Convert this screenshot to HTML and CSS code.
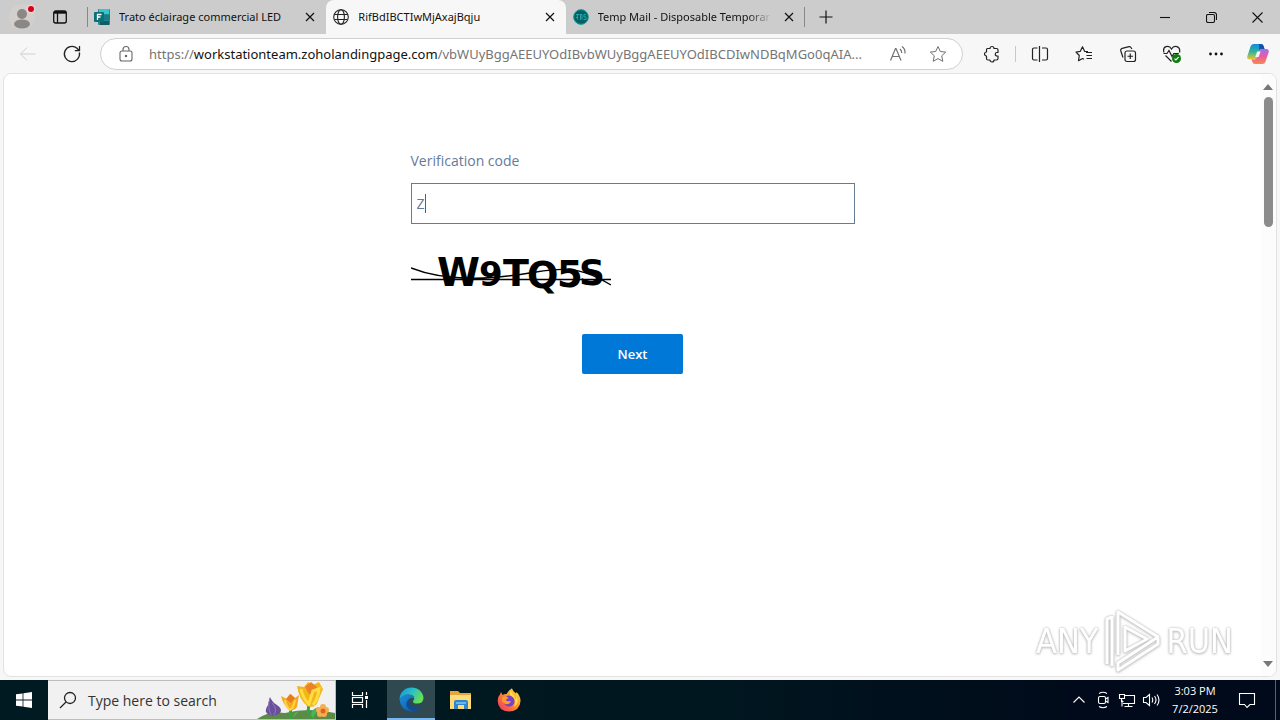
FILE: index.html
```html
<!DOCTYPE html>
<html lang="en">
<head>
<meta charset="utf-8">
<title>RifBdIBCTIwMjAxajBqju</title>
<link rel="stylesheet" href="styles.css">
</head>
<body>
<header class="tabstrip">
  <button class="profile" aria-label="Profile">
    <svg width="32" height="32" viewBox="0 0 32 32"><circle cx="16" cy="16" r="13" fill="#d2cfcd"/><circle cx="16" cy="13" r="5" fill="#8b8785"/><ellipse cx="16" cy="23" rx="8" ry="4.5" fill="#8b8785"/><circle cx="25" cy="8" r="4.5" fill="#e6d5d5"/><circle cx="25" cy="8" r="3" fill="#d9001b"/></svg>
  </button>
  <button class="workspaces" aria-label="Tab actions">
    <svg width="16" height="16" viewBox="0 0 16 16" fill="none" stroke="#111" stroke-width="1.3"><rect x="1.7" y="2" width="12.6" height="12" rx="2"/><path d="M2 3.4h12" stroke-width="2.6"/><path d="M5.5 4v10"/></svg>
  </button>
  <nav class="tabs">
    <div class="tab tab-first">
      <svg width="16" height="16" viewBox="0 0 16 16"><rect x="4" y="0" width="12" height="16" rx="1" fill="#1c8f94"/><path d="M5 0h10v5H5z" fill="#37c6d0"/><path d="M9 6h7v5H9z" fill="#1a7c83"/><path d="M6 12h9v4H6z" fill="#105c62"/><rect x="0" y="3" width="10" height="10" rx="1" fill="#087177"/><path d="M3.5 11V5.500h4M3.500 8h3" fill="none" stroke="#fff" stroke-width="1.3"/></svg>
      <span class="tab-title">Trato éclairage commercial LED</span>
      <button class="tab-close" aria-label="Close tab"><svg width="10" height="10" viewBox="0 0 10 10"><path d="M1 1l8 8M9 1L1 9"/></svg></button>
    </div>
    <div class="tab tab-active">
      <svg width="16" height="16" viewBox="0 0 16 16" fill="none" stroke="#222" stroke-width="1.1"><circle cx="8" cy="8" r="7.300"/><ellipse cx="8" cy="8" rx="3.400" ry="7.300"/><path d="M1.500 5.500h13M1.500 10.500h13"/></svg>
      <span class="tab-title">RifBdIBCTIwMjAxajBqju</span>
      <button class="tab-close" aria-label="Close tab"><svg width="10" height="10" viewBox="0 0 10 10"><path d="M1 1l8 8M9 1L1 9"/></svg></button>
    </div>
    <div class="tab tab-last">
      <svg width="16" height="16" viewBox="0 0 16 16"><circle cx="8" cy="8" r="7.500" fill="#075f66"/><circle cx="8" cy="8" r="7.300" fill="none" stroke="#14a39a" stroke-width="1"/><path d="M3 5.500h3.500M4.500 5.500v5M7.500 5v6M7.500 5.500h1.500v5M13 5.500h-2v2.500h2v2.500h-2.500M3 8.500h2" stroke="#22a8a4" fill="none"/></svg>
      <span class="tab-title tab-title-fade">Temp Mail - Disposable Temporar</span>
      <button class="tab-close" aria-label="Close tab"><svg width="10" height="10" viewBox="0 0 10 10"><path d="M1 1l8 8M9 1L1 9"/></svg></button>
    </div>
  </nav>
  <button class="new-tab" aria-label="New tab"><svg width="14" height="14" viewBox="0 0 14 14"><path d="M7 .5v13M.5 7h13" stroke="#111" stroke-width="1.2"/></svg></button>
  <div class="window-controls">
    <button aria-label="Minimize"><svg width="10" height="10" viewBox="0 0 10 10"><path d="M0 5.500h10"/></svg></button>
    <button aria-label="Restore"><svg width="11" height="11" viewBox="0 0 11 11"><rect x=".5" y="2.500" width="8" height="8" rx="1.500"/><path d="M3 .5h5a2.500 2.500 0 0 1 2.500 2.500v5"/></svg></button>
    <button aria-label="Close"><svg width="11" height="11" viewBox="0 0 11 11"><path d="M.5.5l10 10M10.500.5l-10 10"/></svg></button>
  </div>
</header>

<div class="toolbar">
  <button class="tool" aria-label="Back" disabled><svg width="20" height="20" viewBox="0 0 20 20" stroke="#cfcfcf"><path d="M17.500 10h-15M9 3.500L2.500 10 9 16.500"/></svg></button>
  <button class="tool" aria-label="Refresh"><svg width="20" height="20" viewBox="0 0 20 20" stroke="#222" stroke-width="1.3"><path d="M17.400 8.500A7.600 7.600 0 1 1 15 4.300l2 2.200M17.500 2v4.700h-4.700"/></svg></button>
  <div class="address">
    <svg width="16" height="18" viewBox="0 0 16 18" stroke="#666" stroke-width="1.100"><rect x="2" y="6" width="12" height="10" rx="2"/><path d="M5 6V4.500a3 3 0 0 1 6 0V6"/><circle cx="8" cy="11" r=".7" fill="#666"/></svg>
    <a class="url" href="#">https://<span class="host">workstationteam.zoholandingpage.com</span>/vbWUyBggAEEUYOdIBvbWUyBggAEEUYOdIBCDIwNDBqMGo0qAIA...</a>
    <button class="mini" aria-label="Read aloud"><svg width="18" height="18" viewBox="0 0 18 18" stroke="#707070" stroke-width="1.200"><path d="M1.500 15.500L6.500 3.500h.5L12 15.500M3.300 11.500h7M11 4q1.700 1.200 1.700 4M13 1.500q3.500 2.500 3 7"/></svg></button>
    <button class="mini" aria-label="Favorite"><svg width="18" height="18" viewBox="0 0 18 18" stroke="#707070"><path d="M9 1.500l2.300 5 5.400.6-4 3.700 1.100 5.500L9 13.600l-4.800 2.700 1.100-5.500-4-3.700 5.400-.6z" stroke-linejoin="round"/></svg></button>
  </div>
  <button class="tool" aria-label="Extensions"><svg width="18" height="18" viewBox="0 0 18 18" stroke="#222" stroke-width="1.200"><path d="M4.500 3.500H7a2 2 0 1 1 4 0h2.500A1.500 1.500 0 0 1 15 5v2.500h-1a1.700 1.700 0 0 0 0 3.500h1v2.500a1.500 1.500 0 0 1-1.500 1.500H11a2 2 0 0 1-4 0H5A1.500 1.500 0 0 1 3.500 13.500V11a2 2 0 1 1 0-4V4.500q0-1 1-1z" stroke-linejoin="round"/></svg></button>
  <span class="divider"></span>
  <button class="tool" aria-label="Split screen"><svg width="18" height="18" viewBox="0 0 18 18" stroke="#222" stroke-width="1.200"><path d="M6.500 3H3a1.500 1.500 0 0 0-1.500 1.500v9A1.500 1.500 0 0 0 3 15h3.500M11 3h4a1.500 1.500 0 0 1 1.500 1.500v9A1.500 1.500 0 0 1 15 15h-4M8.500 1v16"/></svg></button>
  <button class="tool" aria-label="Favorites"><svg width="18" height="18" viewBox="0 0 18 18" stroke="#222" stroke-width="1.200"><path d="M13 6.500H9.700L7.500 1.800 5.300 6.300 1 7l3.300 3.500-.8 5.200L7.500 13.500l1.500.8M11 7.500h6M11.500 10.500H17M11.500 13.500H17" stroke-linejoin="round"/></svg></button>
  <button class="tool" aria-label="Collections"><svg width="18" height="18" viewBox="0 0 18 18" stroke="#222" stroke-width="1.200"><rect x="6" y="6" width="10.500" height="10.500" rx="2"/><path d="M11.250 8.500v5.500M8.500 11.250H14M4 12.500L1.800 6a2 2 0 0 1 1.400-2.600L10 1.700q1.600-.2 2.300 1.300l.5 1"/></svg></button>
  <button class="tool" aria-label="Browser essentials"><svg width="20" height="18" viewBox="0 0 20 18" stroke="#222" stroke-width="1.200"><path d="M2 7.500C0 1 7-.5 9.500 4 12-.5 19 1 17.500 7.500M1.500 8.500H5l2-3 3 6 1.800-3h5M3.500 10.500l6 6"/><circle cx="14.500" cy="13.500" r="4.500" fill="#107c10" stroke="none"/><path d="M12.500 13.600l1.400 1.400 2.700-2.800" stroke="#fff"/></svg></button>
  <button class="tool" aria-label="Settings and more"><svg width="18" height="18" viewBox="0 0 18 18" stroke="none"><circle cx="3.500" cy="9" r="1.400" fill="#111"/><circle cx="9" cy="9" r="1.400" fill="#111"/><circle cx="14.500" cy="9" r="1.400" fill="#111"/></svg></button>
  <button class="tool tool-copilot" aria-label="Copilot">
    <svg width="22" height="20" viewBox="0 0 22 20" stroke="none">
      <defs>
        <linearGradient id="cpA" x1="0" y1="0" x2="0" y2="1"><stop offset="0" stop-color="#1689e0"/><stop offset=".5" stop-color="#30b49b"/><stop offset="1" stop-color="#f2c230"/></linearGradient>
        <linearGradient id="cpB" x1="0" y1="0" x2="0" y2="1"><stop offset="0" stop-color="#a06df0"/><stop offset=".5" stop-color="#ea5c9d"/><stop offset="1" stop-color="#f98a4b"/></linearGradient>
      </defs>
      <path d="M6.500 0H14q2 0 2.600 2l.9 3h-2.700q-1.900 0-2.500 2L10 13.500Q9.300 15.500 7 15.500H3Q-.5 15.500.4 12L3.500 2.500Q4.400 0 6.500 0z" fill="url(#cpA)"/>
      <path d="M12 0h2q2 0 2.600 2l.9 3h-3q-1.500 0-2.200 1.500z" fill="#174fae"/>
      <path d="M15.500 20H8q-2 0-2.600-2l-.9-2.500h2.700q2.100 0 2.700-2L12 6.800Q12.700 5 15 5h4q3.500 0 2.600 3.500l-3.100 9q-.9 2.500-3 2.500z" fill="url(#cpB)"/>
      <path d="M10.200 7.500h3.400l-2 5.500H8.200z" fill="#f7f7f7"/>
    </svg>
  </button>
</div>

<div class="viewport">
  <main class="page">
    <form class="verify">
      <label for="code">Verification code</label>
      <div class="field"><input id="code" type="text" value="Z" autocomplete="off"><span class="caret"></span></div>
      <svg class="captcha" width="200" height="50" viewBox="0 0 200 50" role="img" aria-label="Captcha">
        <g class="captcha-text">
          <text x="26" y="36" font-size="39">W</text>
          <text x="68" y="36" font-size="34">9</text>
          <text x="92" y="36" font-size="38">T</text>
          <text x="116" y="38" font-size="37">Q</text>
          <text x="146" y="37" font-size="37">5</text>
          <text x="168" y="35" font-size="36">S</text>
        </g>
        <path d="M0 18C40 34 90 28 125 22S175 20 200 35M0 29.500H200" fill="none" stroke="#000" stroke-width="1.400"/>
      </svg>
      <button class="next" type="button">Next</button>
    </form>
  </main>
  <div class="scrollbar" aria-hidden="true">
    <svg width="10" height="6" viewBox="0 0 10 6"><path d="M0 6L5 0l5 6z" fill="#777"/></svg>
    <div class="track"><div class="thumb"></div></div>
    <svg width="10" height="6" viewBox="0 0 10 6"><path d="M0 0l5 6 5-6z" fill="#777"/></svg>
  </div>
  <div class="watermark">
    <span>ANY</span>
    <svg width="58" height="64" viewBox="0 0 58 64" fill="none" stroke="#fff" stroke-width="3" stroke-linejoin="round"><path d="M4 55V10l5-2M9 57V7M15 46V3l40 25L15 54v7l40-26v-6M22 42V18l22 12z"/></svg>
    <span>RUN</span>
  </div>
</div>

<footer class="taskbar">
  <button class="start" aria-label="Start"><svg width="16" height="16" viewBox="0 0 16 16" fill="#fff"><path d="M0 2.300L6.600 1.400V7.600H0zM7.400 1.300L16 0v7.600H7.400zM0 8.400h6.600v6.200L0 13.700zM7.400 8.400H16V16l-8.600-1.200z"/></svg></button>
  <button class="search">
    <svg class="magnifier" width="18" height="18" viewBox="0 0 18 18" fill="none" stroke="#222" stroke-width="1.300"><circle cx="11" cy="7" r="5.500"/><path d="M7 11L1 17"/></svg>
    <span>Type here to search</span>
    <svg class="flowers" width="80" height="38" viewBox="0 0 80 38">
      <path d="M2 38Q14 30 30 32 54 26 80 32V38z" fill="#5c8b48"/>
      <path d="M36 38Q34 31 37 25M56 37Q51 30 55 22" fill="none" stroke="#37a344" stroke-width="3"/>
      <path d="M56 34Q57 27 64 26L58 37zM38 37Q38 31 44 30z" fill="#49b553"/>
      <path d="M15 16Q17 21 22 24 28 28 25 32 20 36 14 34 8 31 13 24z" fill="#68509b"/><path d="M15 17Q12 26 16 34M17 22Q23 28 19 34" fill="none" stroke="#8f77bd"/>
      <path d="M26 15l6 3 4-5 4 4 4-3-2 12Q39 31 33 28 28 23 26 15z" fill="#f4a91d"/><path d="M31 18l4-5 5 4-4 5z" fill="#e77b20"/><path d="M30 19Q31 26 35 29 39 26 40 19" fill="none" stroke="#ffd347" stroke-width="2"/>
      <path d="M42 5l7 1 4-5 5 3 6-3 4 7-5 12Q61 28 52 25 44 18 42 5z" fill="#f3b51c"/><path d="M50 6l6-5 6 5-3 6-5 1z" fill="#ed8126"/><path d="M46 8Q48 18 54 23L58 10 64 8Q63 18 58 24" fill="none" stroke="#ffdc3f" stroke-width="3"/>
      <g fill="#f6ae52"><circle cx="68" cy="26" r="3"/><circle cx="71" cy="29" r="3"/><circle cx="69" cy="33" r="3"/><circle cx="65" cy="33" r="3"/><circle cx="64" cy="29" r="3"/></g><circle cx="68" cy="30" r="2.500" fill="#d9681d"/>
    </svg>
  </button>
  <button class="app app-taskview" aria-label="Task view"><svg width="18" height="18" viewBox="0 0 18 18" fill="none" stroke="#fff" stroke-width="1.200"><path d="M1.500 1v3.500h10V1M1.500 17v-3.500h10V17M15.500 1v3M15.500 9v8"/><rect x="1.500" y="6.500" width="10" height="5"/><path d="M14 6.500h3" stroke-width="3"/></svg></button>
  <button class="app app-current" aria-label="Microsoft Edge">
    <svg width="25" height="25" viewBox="0 0 25 25">
      <defs><linearGradient id="edA" x1="0" y1="0" x2="1" y2=".5"><stop offset="0" stop-color="#168fd8"/><stop offset=".5" stop-color="#27bfc9"/><stop offset="1" stop-color="#66df55"/></linearGradient><linearGradient id="edB" x1="0" y1="0" x2="1" y2="1"><stop offset="0" stop-color="#1a91dc"/><stop offset="1" stop-color="#0c4b9b"/></linearGradient></defs>
      <path d="M.5 12C1 5 6 .5 12.500.5 19 .5 24.500 5.300 24.500 11q0 5.500-6.500 5.500-4 0-4-2 0-.7 1-1.900 1-3.100-2.600-4.600Q6 6 .5 12z" fill="url(#edA)"/>
      <path d="M.5 12Q4 7 10 7.500q5 .5 5.200 4Q10 9.500 9 14.500 8.500 21 18 20.500q3-.2 5-1.700Q19 25 12 24.500 1.500 23.500.5 12z" fill="url(#edB)"/>
      <path d="M9.500 12Q5 18 10 22q3 2.500 6 1.800 4.500-1.500 7-5-4.500 2.400-8.500.8Q9 17 9.500 12z" fill="#114c8d"/>
    </svg>
  </button>
  <button class="app" aria-label="File Explorer"><svg width="23" height="20" viewBox="0 0 23 20"><path d="M1 1h8l2 2h11v4H1z" fill="#e8a63a"/><path d="M1 5h21v14H1z" fill="#ffdc79"/><path d="M5 19v-7q0-2 2-2h10q2 0 2 2v7h-4v-4H9v4z" fill="#3387c8"/><path d="M7 12h10v2H7z" fill="#66b8e9"/></svg></button>
  <button class="app" aria-label="Firefox">
    <svg width="24" height="24" viewBox="0 0 24 24"><defs><linearGradient id="ff" x1="1" y1="0" x2="0" y2="1"><stop offset="0" stop-color="#fff04a"/><stop offset=".45" stop-color="#ff912a"/><stop offset="1" stop-color="#f02b67"/></linearGradient></defs>
      <path d="M4 4l1.500 3Q7.500 5.500 9.500 6q2-3.500 4-4.500Q14 .5 15 .5q1 3 4 5l.5-1.500Q23.500 8 23.500 13 23 23 12 23.500 1 23 .7 13 .5 9 3 6.500z" fill="url(#ff)"/><circle cx="12" cy="13" r="5.500" fill="#7542c8"/><path d="M6 9Q9 7 11.500 10l-3 2q2.500 2 5.500 1-1 4-5 3-5-1-3.500-7z" fill="#ff9c2b"/><path d="M13 3q5 4 5 9 2-2 1-5 4 8-2 12 4-8-4-12z" fill="#ffe14a"/></svg>
  </button>
  <div class="tray">
    <button aria-label="Show hidden icons"><svg width="14" height="18" viewBox="0 0 14 18"><path d="M1.500 11.500L7 6l5.500 5.500"/></svg></button>
    <button aria-label="Meet now"><svg width="18" height="18" viewBox="0 0 18 18"><rect x="4.500" y="5.500" width="7" height="7" rx="1.500"/><path d="M11.500 8l2.500-1.500v5L11.500 10M5 2.500q4-2.500 8 0M5 15.500q4 2.500 8 0"/></svg></button>
    <button aria-label="Network"><svg width="18" height="18" viewBox="0 0 18 18"><path d="M7 4.500h9.500v8H5M4 9v6.500M10.500 12.500v3M6.500 15.500h8M1.500 3.500h5v4h-5zM3.500 7.500v3h2"/></svg></button>
    <button aria-label="Volume"><svg width="18" height="18" viewBox="0 0 18 18"><path d="M1.500 6.500H4l3.500-3v11L4 11.500H1.500zM10 6.500q1.500 2.500 0 5M12.500 5q3 4 0 8M15 3.500q4 5.500 0 11"/></svg></button>
    <button class="clock"><span>3:03 PM</span><span>7/2/2025</span></button>
    <button class="notices" aria-label="Notifications"><svg width="18" height="18" viewBox="0 0 18 18"><path d="M1.500 2.500h15v11H12L9 16.500l-2.500-3h-5z"/></svg></button>
    <span class="show-desktop"></span>
  </div>
</footer>
</body>
</html>
```

FILE: styles.css
```css
* { box-sizing: border-box; }

body {
  margin: 0;
  height: 100vh;
  display: flex;
  flex-direction: column;
  background: #f7f7f7;
  color: #111;
  font-family: "Open Sans", "Noto Sans", sans-serif;
  font-size: 11px;
  overflow: hidden;
}

button {
  display: flex;
  align-items: center;
  justify-content: center;
  flex: none;
  margin: 0;
  padding: 0;
  border: 0;
  background: none;
  color: inherit;
  font: inherit;
}

svg { flex: none; display: block; }

/* Tab strip */
.tabstrip { display: flex; height: 34px; flex: none; background: #ccc; }
.profile { width: 44px; }
.workspaces { width: 32px; margin-right: 11px; }
.tabs { display: flex; flex: 0 1 718px; min-width: 0; }
.tab {
  display: flex;
  flex: 1 1 0;
  min-width: 0;
  align-items: center;
  gap: 9px;
  padding: 0 8px 0 7px;
}
.tab-title {
  flex: 1;
  min-width: 0;
  overflow: hidden;
  white-space: nowrap;
  font-family: "Noto Sans", "Open Sans", sans-serif;
  line-height: 20px;
}
.tab-title-fade { mask-image: linear-gradient(to right, #000 86%, transparent); }
.tab-close { width: 16px; height: 20px; }
.tab-close svg { stroke: #111; stroke-width: 1.2; }
.tab-active { background: #f7f7f7; border-radius: 8px 8px 0 0; }
.tab-first, .tab-last { background: linear-gradient(#888, #888) no-repeat; background-size: 1px 20px; }
.tab-first { background-position: left center; }
.tab-last { background-position: right center; }
.new-tab { width: 42px; }
.window-controls { display: flex; margin-left: auto; }
.window-controls button { width: 46px; }
.window-controls svg { fill: none; stroke: #111; stroke-width: 1.1; }

/* Toolbar */
.toolbar { display: flex; align-items: center; height: 40px; flex: none; padding-left: 6px; }
.tool { width: 44px; height: 32px; }
.tool svg, .address svg { fill: none; }
.tool-copilot { width: 42px; padding-right: 2px; }
.address {
  display: flex;
  align-items: center;
  flex: 1;
  min-width: 0;
  height: 32px;
  margin: 0 7px 0 6px;
  padding: 0 4px 0 17px;
  border: 1px solid #d0d0d0;
  border-radius: 16px;
  background: #fff;
}
.url {
  flex: 1;
  min-width: 0;
  margin-left: 15px;
  overflow: hidden;
  white-space: nowrap;
  color: #757575;
  font-family: "Noto Sans", "Open Sans", sans-serif;
  font-size: 13px;
  line-height: 20px;
  text-decoration: none;
}
.host { color: #111; }
.mini { width: 40px; height: 28px; }
.divider { width: 1px; height: 16px; margin: 0 2px 0 1px; background: #c8c8c8; }

/* Web page */
.viewport {
  position: relative;
  display: flex;
  flex: 1;
  min-height: 0;
  margin: -1px 3px 3px;
  border: 1px solid #e2e2e2;
  border-radius: 8px;
  background: #fff;
  overflow: hidden;
}
.page { flex: 1; min-width: 0; padding: 77px 24px 0; }
.verify {
  display: flex;
  flex-direction: column;
  align-items: flex-start;
  max-width: 444px;
  margin: 0 auto;
  color: #667a9c;
  font-size: 14px;
}
.verify label { line-height: 20px; }
.field { position: relative; width: 100%; margin-top: 12px; }
.field input {
  display: block;
  width: 100%;
  height: 41px;
  padding: 0 5px;
  border: 1px solid #647d92;
  border-radius: 0;
  background: #fff;
  color: #667a9c;
  font: inherit;
  outline: 0;
}
.caret { position: absolute; left: 14px; top: 11px; width: 1px; height: 19px; background: #4a6080; }
.captcha { margin-top: 26px; }
.captcha-text { font-family: "DejaVu Sans", sans-serif; font-weight: 700; fill: #000; }
.next {
  align-self: center;
  width: 101px;
  height: 40px;
  margin-top: 34px;
  border-radius: 2px;
  background: #0078d7;
  color: #fff;
  font-size: 13px;
  font-weight: 600;
}
.scrollbar {
  display: flex;
  flex-direction: column;
  align-items: center;
  justify-content: space-between;
  flex: none;
  width: 15px;
  padding: 10px 1px 9px 0;
  background: #fcfcfc;
}
.track { flex: 1; padding-top: 7px; }
.thumb { width: 9px; height: 130px; border-radius: 5px; background: #8b8b8b; }
.watermark {
  position: absolute;
  right: 43px;
  bottom: 3px;
  display: flex;
  align-items: center;
  gap: 5px;
  color: #fff;
  font-family: "Liberation Sans Narrow", "DejaVu Sans Condensed", sans-serif;
  font-size: 34px;
  line-height: 64px;
  filter: drop-shadow(0 0 1px #bbb) drop-shadow(0 1px 1px #ccc);
}

/* Taskbar */
.taskbar {
  display: flex;
  height: 40px;
  flex: none;
  background: linear-gradient(to right, #001a22, #001720 55%, #000a1a 85%);
  color: #fff;
}
.start { width: 48px; }
.search {
  width: 288px;
  padding-left: 11px;
  border: 1px solid #bcbcbc;
  border-width: 1px 1px 1px 0;
  background: #f1f1f1;
  color: #333;
  font-size: 14px;
}
.magnifier { margin-right: 11px; }
.flowers { margin-left: auto; }
.app { width: 48px; margin-right: 1px; }
.app-taskview { margin-right: 3px; }
.app-current { background: #304850; border-bottom: 2px solid #76b9ed; }
.tray { display: flex; margin-left: auto; }
.tray button { width: 24px; }
.tray svg { fill: none; stroke: #fff; stroke-width: 1.1; }
.tray .clock { flex-direction: column; width: 64px; line-height: 18px; }
.tray .notices { width: 40px; }
.show-desktop { width: 5px; margin-left: 8px; border-left: 1px solid #59616c; }
```
